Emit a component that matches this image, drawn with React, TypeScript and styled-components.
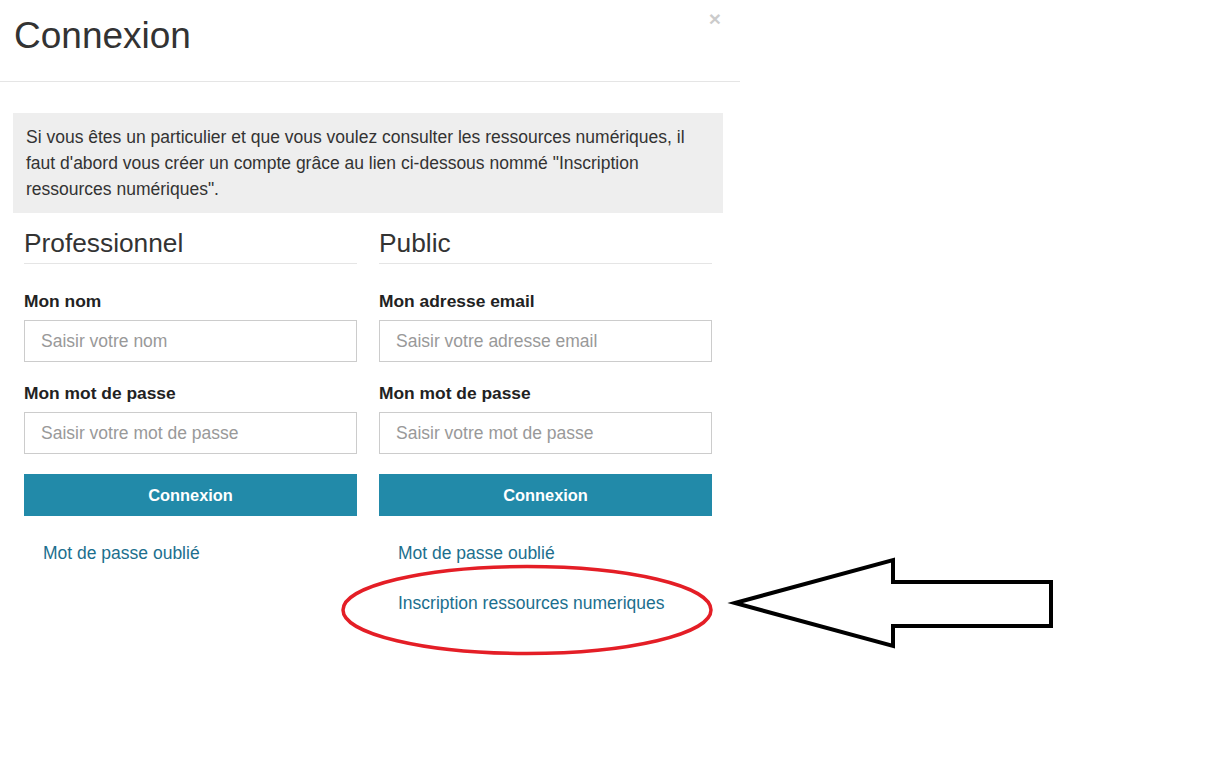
import React from "react";
import styled, { createGlobalStyle } from "styled-components";

const Global = createGlobalStyle`
  html, body { margin: 0; padding: 0; background: #fff; }
  body { font-family: "Liberation Sans", Arial, sans-serif; color: #333; }
  * { box-sizing: border-box; }
`;

const Page = styled.div`
  position: relative;
  width: 1212px;
  height: 763px;
  overflow: hidden;
`;

const Modal = styled.div`
  width: 740px;
`;

const Header = styled.div`
  display: flex;
  justify-content: space-between;
  align-items: flex-start;
  padding: 16px 19px 24px 14px;
  border-bottom: 1px solid #e5e5e5;
`;

const Title = styled.h1`
  margin: 0;
  font-size: 37px;
  line-height: 1.1;
  font-weight: 400;
  color: #333;
`;

const Close = styled.button`
  border: 0;
  background: transparent;
  padding: 0;
  margin-top: -8px;
  font-family: "Liberation Sans", Arial, sans-serif;
  font-size: 21px;
  font-weight: 700;
  line-height: 1;
  color: #000;
  opacity: 0.2;
  cursor: pointer;
`;

const Body = styled.div`
  padding: 31px 17px 0 13px;
`;

const Notice = styled.div`
  background: #eeeeee;
  padding: 11px 13px;
  font-size: 17.5px;
  line-height: 26px;
  color: #333;
`;

const Columns = styled.div`
  display: grid;
  grid-template-columns: 333px 333px;
  column-gap: 22px;
  padding: 0 11px;
`;

const Column = styled.div`
  display: flex;
  flex-direction: column;
`;

const ColTitle = styled.h2`
  margin: 16px 0 0;
  padding-bottom: 5px;
  border-bottom: 1px solid #e5e5e5;
  font-size: 26.3px;
  line-height: 1.1;
  font-weight: 400;
  color: #333;
`;

const Label = styled.label<{ $first?: boolean }>`
  display: block;
  margin-top: ${(p) => (p.$first ? "26px" : "20px")};
  margin-bottom: 1px;
  font-size: 17.4px;
  line-height: 22.4px;
  font-weight: 700;
  color: #222;
`;

const Input = styled.input`
  display: block;
  width: 100%;
  height: 42px;
  margin-top: 7px;
  padding: 0 16px;
  border: 1px solid #cccccc;
  border-radius: 0;
  font-family: "Liberation Sans", Arial, sans-serif;
  font-size: 17.5px;
  color: #555;
  &::placeholder { color: #999; }
`;

const Button = styled.button`
  display: block;
  width: 100%;
  height: 42px;
  margin-top: 20px;
  border: 0;
  background: #228aa9;
  color: #fff;
  font-family: "Liberation Sans", Arial, sans-serif;
  font-size: 16.4px;
  font-weight: 700;
  cursor: pointer;
`;

const Link = styled.a<{ $gap?: number }>`
  display: block;
  margin: ${(p) => p.$gap ?? 27}px 0 0 19px;
  font-size: 17.5px;
  line-height: 20px;
  color: #1c6f8e;
  text-decoration: none;
`;

const Overlay = styled.svg`
  position: absolute;
  left: 0;
  top: 0;
  pointer-events: none;
`;

export default function App() {
  return (
    <Page>
      <Global />
      <Modal>
        <Header>
          <Title>Connexion</Title>
          <Close aria-label="Fermer">×</Close>
        </Header>
        <Body>
          <Notice>
            Si vous êtes un particulier et que vous voulez consulter les ressources numériques, il
            <br />
            faut d'abord vous créer un compte grâce au lien ci-dessous nommé "Inscription
            <br />
            ressources numériques".
          </Notice>
          <Columns>
            <Column>
              <ColTitle>Professionnel</ColTitle>
              <Label $first>Mon nom</Label>
              <Input placeholder="Saisir votre nom" />
              <Label>Mon mot de passe</Label>
              <Input type="password" placeholder="Saisir votre mot de passe" />
              <Button>Connexion</Button>
              <Link href="#">Mot de passe oublié</Link>
            </Column>
            <Column>
              <ColTitle>Public</ColTitle>
              <Label $first>Mon adresse email</Label>
              <Input placeholder="Saisir votre adresse email" />
              <Label>Mon mot de passe</Label>
              <Input type="password" placeholder="Saisir votre mot de passe" />
              <Button>Connexion</Button>
              <Link href="#">Mot de passe oublié</Link>
              <Link href="#" $gap={30}>Inscription ressources numeriques</Link>
            </Column>
          </Columns>
        </Body>
      </Modal>
      <Overlay width="1212" height="763" viewBox="0 0 1212 763">
        <ellipse cx="527" cy="610" rx="184" ry="43.5" fill="none" stroke="#e41e26" strokeWidth="3.5" />
        <polygon
          points="735,603 893,560 893,582 1051,582 1051,626 893,626 893,646"
          fill="none"
          stroke="#000"
          strokeWidth="4"
          strokeLinejoin="miter"
        />
      </Overlay>
    </Page>
  );
}
